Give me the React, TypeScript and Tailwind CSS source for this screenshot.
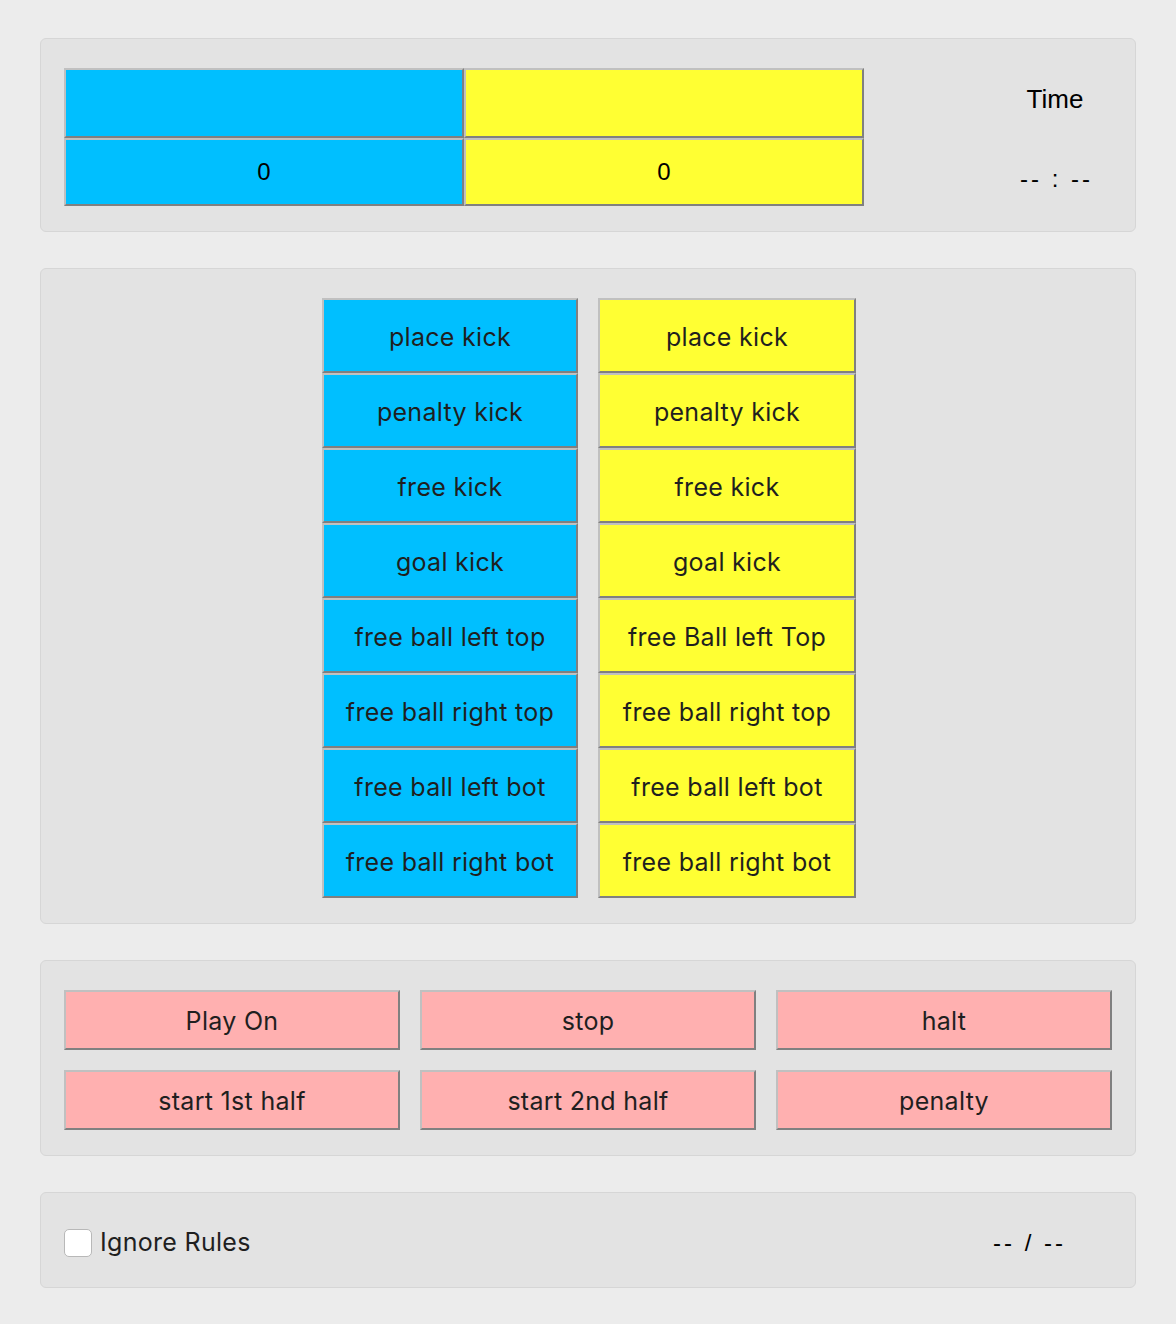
import React from 'react';

const blueKicks = [
  'place kick',
  'penalty kick',
  'free kick',
  'goal kick',
  'free ball left top',
  'free ball right top',
  'free ball left bot',
  'free ball right bot',
];

const yellowKicks = [
  'place kick',
  'penalty kick',
  'free kick',
  'goal kick',
  'free Ball left Top',
  'free ball right top',
  'free ball left bot',
  'free ball right bot',
];

const controls = ['Play On', 'stop', 'halt', 'start 1st half', 'start 2nd half', 'penalty'];

// outset look like the classic button border
const outset = 'border-2 border-t-[#c0c0c0] border-l-[#c0c0c0] border-b-[#808080] border-r-[#808080]';

const uiFont = { fontFamily: 'Inter, "Noto Sans", sans-serif' };
const helv = { fontFamily: '"Liberation Sans", Arial, sans-serif' };

function Panel({ className, children }: { className?: string; children: React.ReactNode }) {
  return (
    <div className={`rounded-md border border-[#d6d6d6] bg-[#e3e3e3] ${className ?? ''}`}>{children}</div>
  );
}

export default function App() {
  return (
    <div className="min-h-screen bg-[#ececec] px-10 pt-[38px] pb-[37px] flex flex-col gap-9">
      {/* Score board */}
      <Panel className="flex pl-[23px] pt-[29px] pb-[25px] h-[194px]">
        <div className="grid grid-cols-2 w-[800px] text-black text-2xl" style={helv}>
          <div className={`${outset} bg-[#00bfff] h-[70px]`} />
          <div className={`${outset} bg-[#ffff33] h-[70px]`} />
          <div className={`${outset} bg-[#00bfff] h-[68px] flex items-center justify-center`}>0</div>
          <div className={`${outset} bg-[#ffff33] h-[68px] flex items-center justify-center`}>0</div>
        </div>
        <div className="ml-auto w-[160px] flex flex-col items-center text-black" style={helv}>
          <div className="mt-[16px] h-[30px] leading-[30px] text-[26px]">Time</div>
          <div className="mt-[50px] h-[30px] leading-[30px] text-2xl tracking-[3px] pl-[3px]">-- : --</div>
        </div>
      </Panel>

      {/* Free kick buttons */}
      <Panel className="flex justify-center pl-[2px] pt-[29px] pb-[25px]">
        <div className="flex gap-5" style={uiFont}>
          <div className="flex flex-col w-[256px]">
            {blueKicks.map((label, i) => (
              <button
                key={i}
                className={`${outset} bg-[#00bfff] h-[75px] pt-1 text-[25px] tracking-[0.3px] text-[#1f1f1f]`}
              >
                {label}
              </button>
            ))}
          </div>
          <div className="flex flex-col w-[258px]">
            {yellowKicks.map((label, i) => (
              <button
                key={i}
                className={`${outset} bg-[#ffff33] h-[75px] pt-1 text-[25px] tracking-[0.3px] text-[#1f1f1f]`}
              >
                {label}
              </button>
            ))}
          </div>
        </div>
      </Panel>

      {/* Game controls */}
      <Panel className="px-[23px] pt-[29px] pb-[25px]">
        <div className="grid grid-cols-3 gap-x-5 gap-y-5" style={uiFont}>
          {controls.map((label) => (
            <button
              key={label}
              className={`${outset} bg-[#ffb0b0] h-[60px] pt-1 text-[25px] tracking-[0.3px] text-[#1f1f1f]`}
            >
              {label}
            </button>
          ))}
        </div>
      </Panel>

      {/* Footer */}
      <Panel className="h-[96px] flex items-center pl-[23px] pt-[6px]">
        <label className="flex items-center gap-2 text-[25px] tracking-[0.3px] text-[#1f1f1f]" style={uiFont}>
          <span className="w-[28px] h-[28px] rounded-[5px] border border-[#b8b8b8] bg-white" />
          Ignore Rules
        </label>
        <div className="ml-auto w-[142px] text-black text-2xl tracking-[3px]" style={helv}>
          -- / --
        </div>
      </Panel>
    </div>
  );
}
